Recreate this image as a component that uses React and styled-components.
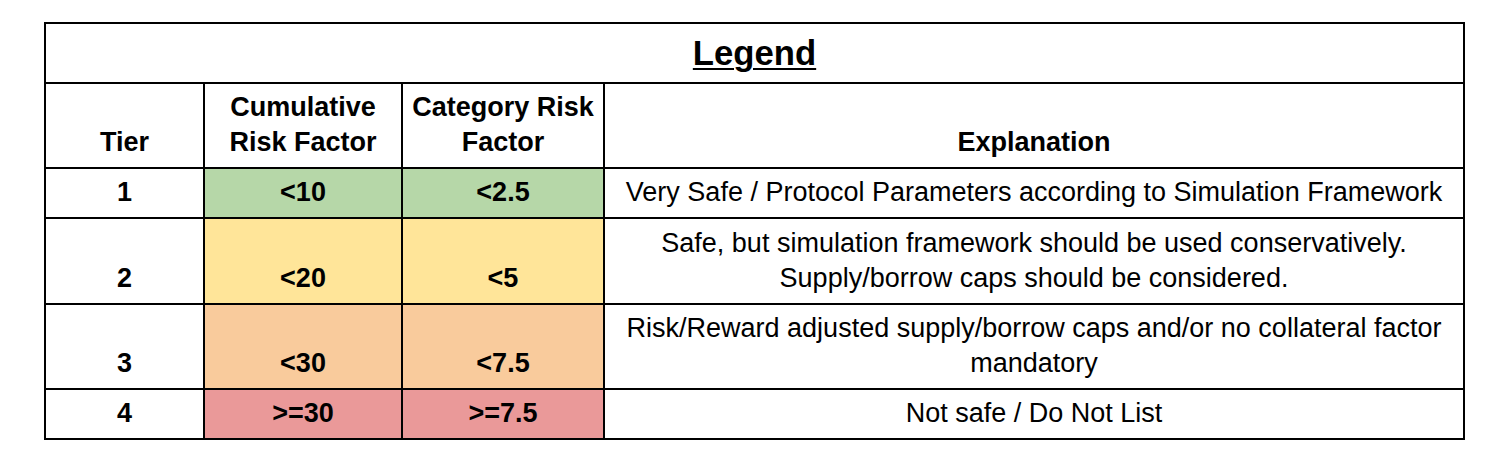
import styled, { createGlobalStyle } from "styled-components";

const GlobalStyle = createGlobalStyle`
    html, body {
        margin: 0;
        padding: 0;
        background: #ffffff;
    }
    body {
        font-family: "Liberation Sans", Arial, Helvetica, sans-serif;
        color: #000;
    }
`;

const tiers = [
    { tier: "1", cumulative: "<10", category: "<2.5", color: "#b6d7a8", text: "Very Safe / Protocol Parameters according to Simulation Framework", height: 48 },
    { tier: "2", cumulative: "<20", category: "<5", color: "#ffe599", text: "Safe, but simulation framework should be used conservatively. Supply/borrow caps should be considered.", height: 84 },
    { tier: "3", cumulative: "<30", category: "<7.5", color: "#f9cb9c", text: "Risk/Reward adjusted supply/borrow caps and/or no collateral factor mandatory", height: 83 },
    { tier: "4", cumulative: ">=30", category: ">=7.5", color: "#ea9999", text: "Not safe / Do Not List", height: 48 },
];

function App() {
    const rowHeights = [58, 83, ...tiers.map((t) => t.height)].map((h) => `${h}px`).join(" ");

    return (
        <>
            <GlobalStyle />
            <Page>
                <LegendGrid style={{ gridTemplateRows: rowHeights }}>
                    <TitleCell>
                        <Title>Legend</Title>
                    </TitleCell>
                    <Cell $bold>Tier</Cell>
                    <Cell $bold>Cumulative Risk Factor</Cell>
                    <Cell $bold>Category Risk Factor</Cell>
                    <Cell $bold>Explanation</Cell>
                    {tiers.map((t) => (
                        <Row key={t.tier} {...t} />
                    ))}
                </LegendGrid>
            </Page>
        </>
    );
}

function Row({ tier, cumulative, category, color, text }) {
    return (
        <>
            <Cell $bold>{tier}</Cell>
            <Cell $bold $bg={color}>{cumulative}</Cell>
            <Cell $bold $bg={color}>{category}</Cell>
            <Cell>{text}</Cell>
        </>
    );
}

export default App;

const Page = styled.div`
    padding: 22px 0 0 44px;
    width: 1500px;
    height: 468px;
    box-sizing: border-box;
`;

const LegendGrid = styled.div`
    display: grid;
    grid-template-columns: 157px 196px 200px 858px;
    gap: 2px;
    padding: 2px;
    width: max-content;
    background: #000;
`;

const Cell = styled.div`
    background: ${(props) => props.$bg || "#ffffff"};
    display: flex;
    flex-direction: column;
    justify-content: flex-end;
    align-items: center;
    text-align: center;
    padding: 0 6px 7px;
    font-size: 27px;
    line-height: 35px;
    font-weight: ${(props) => (props.$bold ? 700 : 400)};
    overflow: hidden;
`;

const TitleCell = styled.div`
    grid-column: 1 / -1;
    background: #ffffff;
    display: flex;
    align-items: center;
    justify-content: center;
`;

const Title = styled.span`
    font-size: 34.7px;
    font-weight: 700;
    text-decoration: underline;
    text-decoration-thickness: 2px;
    text-underline-offset: 3px;
    margin-top: 1px;
`;
